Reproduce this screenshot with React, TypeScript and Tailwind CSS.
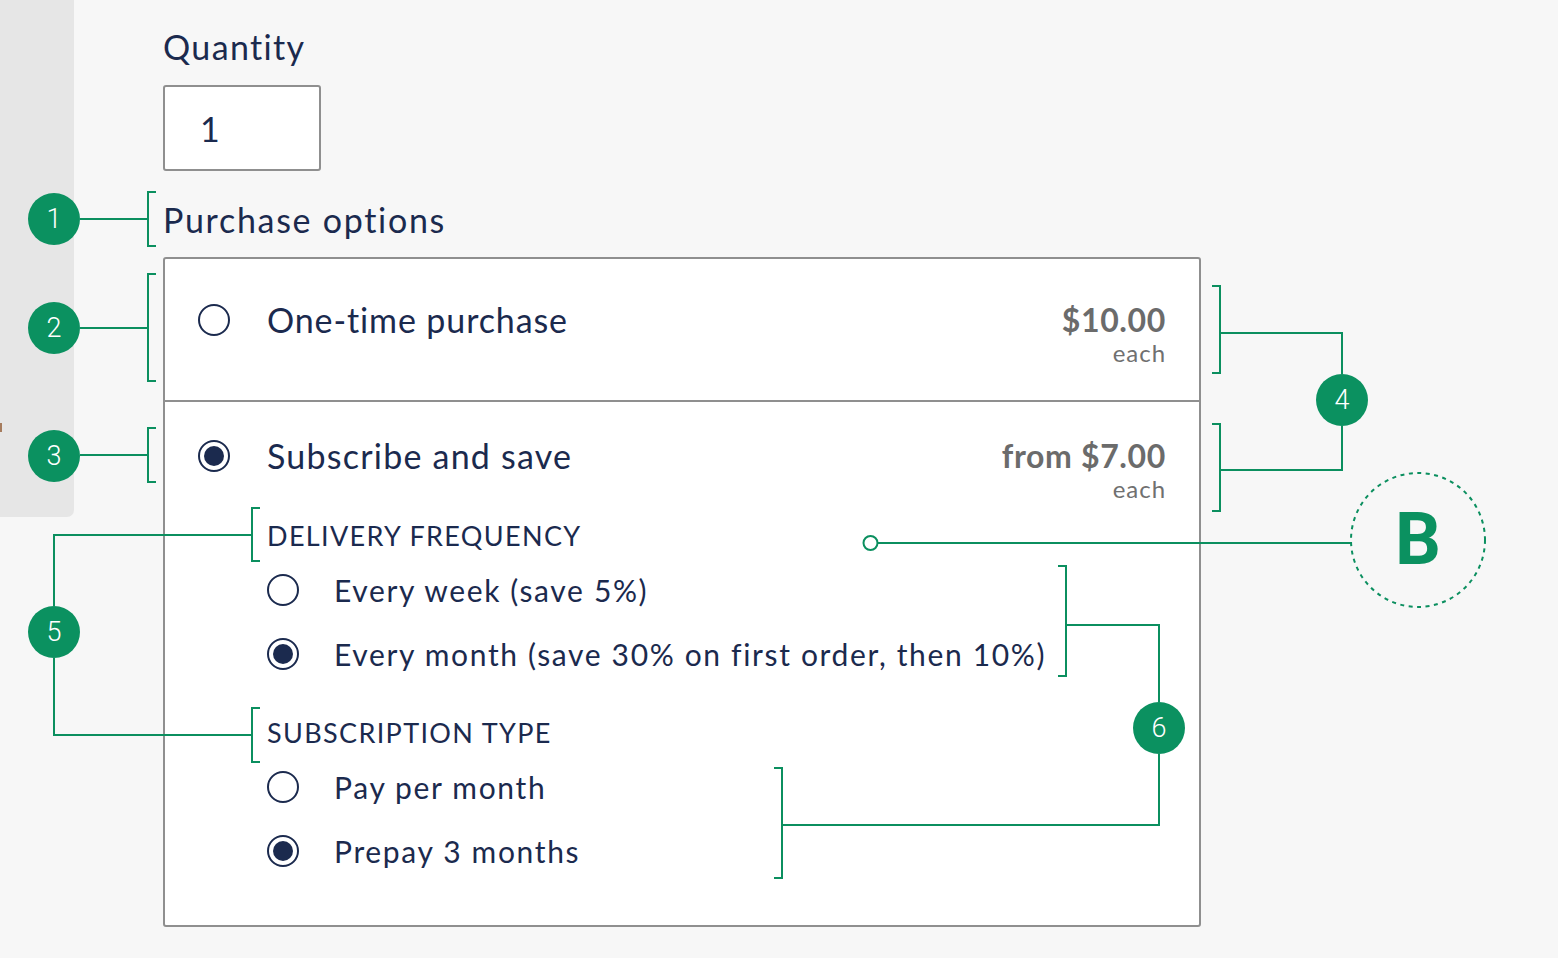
import React from 'react';

const NAVY = 'text-[#1b2a4e]';

type RadioProps = { checked?: boolean };

const Radio: React.FC<RadioProps> = ({ checked }) => (
  <span className="flex h-[32px] w-[32px] shrink-0 items-center justify-center rounded-full border-2 border-[#1b2a4e] bg-white">
    {checked && <span className="h-[20px] w-[20px] rounded-full bg-[#1b2a4e]" />}
  </span>
);

const SubOption: React.FC<{ label: string; checked?: boolean }> = ({ label, checked }) => (
  <label className="flex h-[40px] items-center gap-[35px]">
    <Radio checked={checked} />
    <span className={`text-[30px] leading-[40px] tracking-[0.055em] ${NAVY}`}>{label}</span>
  </label>
);

const Price: React.FC<{ value: string }> = ({ value }) => (
  <div className="flex flex-col items-end">
    <span className="text-[32px] font-bold leading-[40px] tracking-[0.02em] text-[#6b6b6b]">{value}</span>
    <span className="mt-[-2px] text-[24px] leading-[30px] tracking-[0.04em] text-[#707070]">each</span>
  </div>
);

const Badge: React.FC<{ n: string; className: string }> = ({ n, className }) => (
  <div
    className={`absolute flex h-[52px] w-[52px] items-center justify-center rounded-full bg-[#0b9160] text-[27px] font-light text-white ${className}`}
    style={{ fontFamily: 'Roboto, sans-serif' }}
  >
    {n}
  </div>
);

// callout leader lines and brackets drawn over the form
const Callouts = () => (
  <svg className="pointer-events-none absolute inset-0" width="1558" height="958" fill="none" stroke="#0b8f5f" strokeWidth="2">
    {/* 1 */}
    <path d="M80 219H148M156 192H148V246H156" />
    {/* 2 */}
    <path d="M80 328H148M156 274H148V381H156" />
    {/* 3 */}
    <path d="M80 455H148M156 428H148V482H156" />
    {/* 4 */}
    <path d="M1212 286H1220V373H1212M1220 333H1342V374" />
    <path d="M1212 424H1220V511H1212M1220 470H1342V426" />
    {/* 5 */}
    <path d="M54 606V535H252M260 508H252V561H260" />
    <path d="M54 658V735H252M260 708H252V762H260" />
    {/* 6 */}
    <path d="M1058 566H1066V676H1058M1066 625H1159V702" />
    <path d="M774 768H782V878H774M782 825H1159V754" />
    {/* B */}
    <circle cx="870.5" cy="543" r="7" />
    <path d="M877.5 543H1351" />
    <circle cx="1418" cy="540" r="67" strokeDasharray="4 4.5" />
  </svg>
);

export default function App() {
  return (
    <div
      className="relative flex h-[958px] w-[1558px] items-start overflow-hidden bg-[#f7f7f7]"
      style={{ fontFamily: 'Lato, "Open Sans", sans-serif' }}
    >
      <aside className="flex h-[517px] w-[74px] shrink-0 flex-col rounded-br-[7px] bg-[#e6e6e6] pt-[423px]">
        <span className="h-[9px] w-[2px] bg-[#a67c5e]" />
      </aside>

      <main className="ml-[89px] flex w-[1038px] flex-col pt-[27px]">
        <h2 className={`text-[34px] leading-[40px] tracking-[0.04em] ${NAVY}`}>Quantity</h2>
        <div className="mt-[18px] flex h-[86px] w-[158px] items-center rounded-[3px] border-2 border-[#8f8f8f] bg-white pl-[35px]">
          <span className={`text-[34px] ${NAVY}`}>1</span>
        </div>

        <h2 className={`mt-[29px] text-[34px] leading-[40px] tracking-[0.05em] ${NAVY}`}>Purchase options</h2>

        <div className="mt-[17px] flex flex-col rounded-[3px] border-2 border-[#8f8f8f] bg-white">
          <div className="flex h-[141px] items-start justify-between px-[33px] pt-[41px]">
            <div className="flex items-center gap-[37px]">
              <Radio />
              <span className={`text-[34px] leading-[40px] tracking-[0.026em] ${NAVY}`}>One-time purchase</span>
            </div>
            <Price value="$10.00" />
          </div>

          <div className="flex flex-col border-t-2 border-[#8f8f8f] px-[33px] pt-[34px] pb-[54px]">
            <div className="flex items-start justify-between">
              <div className="flex h-[40px] items-center gap-[37px]">
                <Radio checked />
                <span className={`text-[34px] leading-[40px] tracking-[0.036em] ${NAVY}`}>Subscribe and save</span>
              </div>
              <Price value="from $7.00" />
            </div>

            <div className="flex flex-col pl-[69px]">
              <h3 className={`mt-[16px] text-[27px] uppercase leading-[32px] tracking-[0.05em] ${NAVY}`}>Delivery frequency</h3>
              <div className="mt-[18px] flex flex-col gap-[24px]">
                <SubOption label="Every week (save 5%)" />
                <SubOption label="Every month (save 30% on first order, then 10%)" checked />
              </div>

              <h3 className={`mt-[43px] text-[27px] uppercase leading-[32px] tracking-[0.05em] ${NAVY}`}>Subscription type</h3>
              <div className="mt-[18px] flex flex-col gap-[24px]">
                <SubOption label="Pay per month" />
                <SubOption label="Prepay 3 months" checked />
              </div>
            </div>
          </div>
        </div>
      </main>

      <Callouts />
      <Badge n="1" className="left-[28px] top-[193px]" />
      <Badge n="2" className="left-[28px] top-[302px]" />
      <Badge n="3" className="left-[28px] top-[430px]" />
      <Badge n="4" className="left-[1316px] top-[374px]" />
      <Badge n="5" className="left-[28px] top-[606px]" />
      <Badge n="6" className="left-[1133px] top-[702px]" />
      <div
        className="absolute left-[1351px] top-[473px] flex h-[134px] w-[134px] items-center justify-center text-[72px] font-bold leading-none text-[#0b9160]"
        style={{ fontFamily: 'Roboto, sans-serif' }}
      >
        B
      </div>
    </div>
  );
}
